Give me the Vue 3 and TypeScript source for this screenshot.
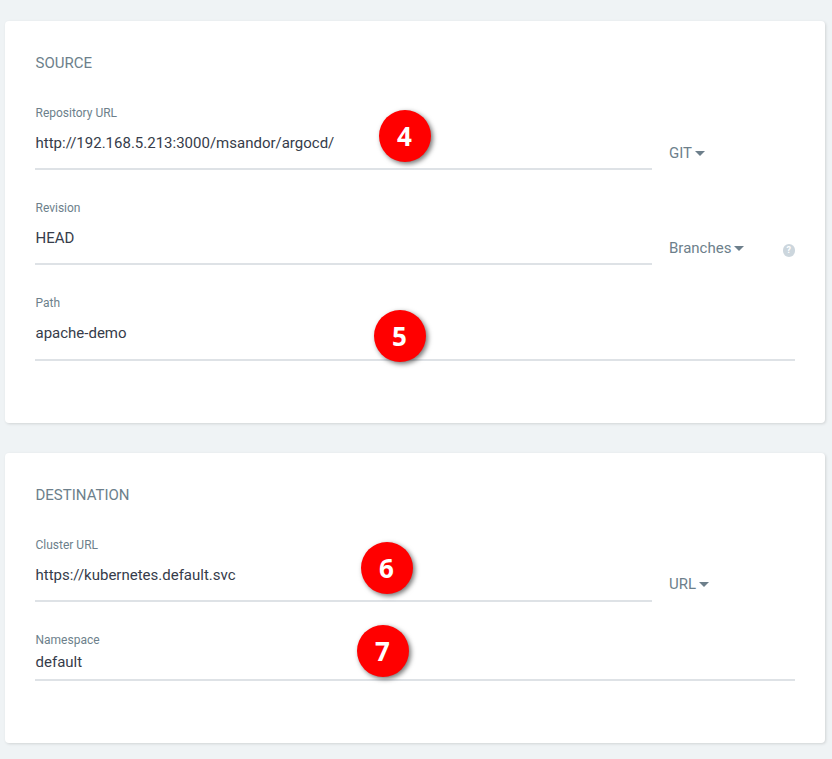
<script setup lang="ts">
interface Field {
  label: string
  value: string
  tag?: string
  help?: boolean
  tight?: boolean
  raised?: boolean
}
interface Badge {
  n: number
  left: number
  top: number
}
interface Section {
  title: string
  height: number
  fields: Field[]
  badges: Badge[]
}
const sections: Section[] = [
  {
    title: 'SOURCE',
    height: 402,
    fields: [
      { label: 'Repository URL', value: 'http://192.168.5.213:3000/msandor/argocd/', tag: 'GIT' },
      { label: 'Revision', value: 'HEAD', tag: 'Branches', help: true },
      { label: 'Path', value: 'apache-demo' },
    ],
    badges: [
      { n: 4, left: 373.5, top: 89 },
      { n: 5, left: 368.5, top: 289 },
    ],
  },
  {
    title: 'DESTINATION',
    height: 290,
    fields: [
      { label: 'Cluster URL', value: 'https://kubernetes.default.svc', tag: 'URL', raised: true },
      { label: 'Namespace', value: 'default', tight: true },
    ],
    badges: [
      { n: 6, left: 355.5, top: 88.5 },
      { n: 7, left: 351.5, top: 171.5 },
    ],
  },
]
</script>

<template>
  <main class="page">
    <section
      v-for="s in sections"
      :key="s.title"
      class="card"
      :style="{ height: s.height + 'px' }"
    >
      <h2 class="title">{{ s.title }}</h2>
      <div class="fields">
        <div v-for="f in s.fields" :key="f.label" class="row" :class="{ tight: f.tight }">
          <div class="field" :class="{ short: f.tag }">
            <label class="label">{{ f.label }}</label>
            <div class="value">{{ f.value }}</div>
          </div>
          <div v-if="f.tag" class="side" :class="{ raised: f.raised }">
            <span class="tag">{{ f.tag }}<i class="caret"></i></span>
            <span v-if="f.help" class="help">?</span>
          </div>
        </div>
      </div>
      <span
        v-for="b in s.badges"
        :key="b.n"
        class="badge"
        :style="{ left: b.left + 'px', top: b.top + 'px' }"
      >{{ b.n }}</span>
    </section>
  </main>
</template>

<style>
html, body {
  margin: 0;
  background: #eff3f5;
}
</style>

<style scoped>
.page {
  display: flex;
  flex-direction: column;
  gap: 30px;
  box-sizing: border-box;
  width: 832px;
  height: 759px;
  padding: 21px 7px 0 5px;
  overflow: hidden;
  font-family: Roboto, "Liberation Sans", sans-serif;
}
.card {
  position: relative;
  box-sizing: border-box;
  flex: none;
  padding: 33px 30px 0;
  background: #fff;
  border-radius: 4px;
  box-shadow: 1px 1px 3px rgba(0, 0, 0, 0.13);
}
.title {
  margin: 0;
  padding: 1px 0 0 0.5px;
  font-size: 15px;
  line-height: 17px;
  font-weight: 400;
  color: #6d7f8b;
}
.fields {
  display: flex;
  flex-direction: column;
  margin-top: 34px;
}
.row {
  display: flex;
  height: 95px;
}
.row.tight {
  height: 80px;
}
.field {
  flex: 1;
  height: 63px;
  border-bottom: 2px solid #dee2e6;
  position: relative;
}
.field.short {
  flex: none;
  width: 617px;
  height: 62px;
}
.tight .field {
  height: 46px;
}
.label {
  display: block;
  padding-left: 0.5px;
  font-size: 12px;
  line-height: 14px;
  color: #6d7f8b;
}
.value {
  margin-top: 14px;
  padding-left: 0.5px;
  font-size: 15px;
  line-height: 18px;
  color: #363c4a;
}
.tight .value {
  margin-top: 6px;
}
.side {
  position: relative;
  display: flex;
  flex: 1;
  padding-top: 39px;
  padding-left: 17px;
  box-sizing: border-box;
  justify-content: space-between;
  align-items: flex-start;
}
.side.raised {
  padding-top: 38px;
}
.tag {
  display: inline-flex;
  align-items: center;
  font-size: 15px;
  line-height: 17px;
  color: #6d7f8b;
}
.caret {
  width: 0;
  height: 0;
  margin-left: 3px;
  margin-top: -1px;
  border-left: 5px solid transparent;
  border-right: 5px solid transparent;
  border-top: 5px solid #6d7f8b;
}
.help {
  width: 12.5px;
  height: 12.5px;
  margin-top: 4px;
  border-radius: 50%;
  background: #ccd6dd;
  color: #fff;
  font-size: 9px;
  font-weight: 700;
  line-height: 12.5px;
  text-align: center;
}
.badge {
  position: absolute;
  width: 52px;
  height: 52px;
  border-radius: 50%;
  background: #ff0000;
  color: #fff;
  font-family: "Open Sans", sans-serif;
  font-size: 26px;
  font-weight: 700;
  line-height: 52px;
  text-align: center;
  box-shadow: 2px 2px 5px rgba(0, 0, 0, 0.55);
}
</style>
